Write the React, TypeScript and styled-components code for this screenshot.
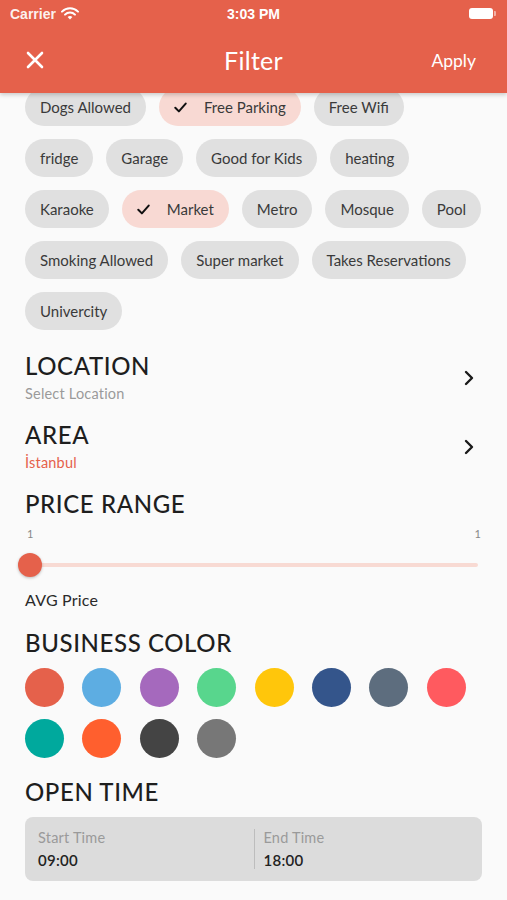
import React from "react";
import styled, { createGlobalStyle } from "styled-components";

const ACCENT = "#E5614B";
const FONT = `"Lato", "Noto Sans", sans-serif`;

const Global = createGlobalStyle`
  html, body { margin: 0; padding: 0; background: #FAFAFA; }
  body { font-family: ${FONT}; -webkit-font-smoothing: antialiased; }
  * { box-sizing: border-box; }
`;

const Page = styled.div`
  width: 507px;
  height: 900px;
  overflow: hidden;
  position: relative;
  background: #FAFAFA;
`;

const Header = styled.header`
  position: absolute;
  top: 0;
  left: 0;
  right: 0;
  height: 93px;
  background: ${ACCENT};
  color: #fff;
  z-index: 2;
  box-shadow: 0 2px 4px rgba(0, 0, 0, 0.18);
  display: flex;
  flex-direction: column;
`;

const StatusBar = styled.div`
  height: 27px;
  display: grid;
  grid-template-columns: 1fr auto 1fr;
  align-items: center;
  padding: 0 10px;
  font-family: "Liberation Sans", sans-serif;
  font-size: 14px;
  font-weight: 600;
`;

const StatusLeft = styled.div`
  display: flex;
  align-items: center;
  gap: 5px;
  color: rgba(255, 255, 255, 0.92);
`;

const StatusRight = styled.div`
  display: flex;
  justify-content: flex-end;
  align-items: center;
`;

const Battery = styled.div`
  width: 24px;
  height: 11px;
  border-radius: 3px;
  background: #fff;
  position: relative;
  margin-right: 4px;
  &::after {
    content: "";
    position: absolute;
    right: -3px;
    top: 3px;
    width: 2px;
    height: 5px;
    border-radius: 0 1px 1px 0;
    background: rgba(255, 255, 255, 0.5);
  }
`;

const NavBar = styled.div`
  flex: 1;
  display: grid;
  grid-template-columns: 1fr auto 1fr;
  align-items: center;
  padding: 0 31px;
`;

const CloseBtn = styled.div`
  display: flex;
  align-items: center;
  margin-left: -6px;
`;

const Title = styled.div`
  font-size: 25px;
  font-weight: 400;
  letter-spacing: 0.3px;
`;

const Apply = styled.div`
  justify-self: end;
  font-size: 17.5px;
`;

const Content = styled.main`
  padding: 88px 25px 20px 25px;
  display: flex;
  flex-direction: column;
`;

const Chips = styled.div`
  display: flex;
  flex-wrap: wrap;
  gap: 13px 13px;
`;

const Chip = styled.div<{ $selected?: boolean }>`
  height: 38px;
  border-radius: 19px;
  padding: 0 15px;
  display: flex;
  align-items: center;
  gap: 17px;
  font-size: 15px;
  letter-spacing: 0;
  color: #3A3A3A;
  background: ${(p) => (p.$selected ? "#F8D9D3" : "#E0E0E0")};
`;

const SectionRow = styled.div<{ $mt: number }>`
  margin-top: ${(p) => p.$mt}px;
  display: flex;
  align-items: center;
  justify-content: space-between;
  padding-right: 8px;
`;

const SectionTitle = styled.h2<{ $mt?: number }>`
  margin: ${(p) => p.$mt ?? 0}px 0 0 0;
  font-size: 24px;
  font-weight: 500;
  color: #1E1E1E;
  letter-spacing: 0.6px;
  line-height: 28px;
`;

const SubText = styled.div<{ $accent?: boolean }>`
  font-size: 14.5px;
  letter-spacing: 0.2px;
  color: ${(p) => (p.$accent ? ACCENT : "#9A9A9A")};
  line-height: 18px;
  margin-top: 5px;
`;

const RangeLabels = styled.div`
  display: flex;
  justify-content: space-between;
  font-size: 11px;
  color: #888;
  margin-top: 9px;
  padding: 0 1px 0 2px;
`;

const SliderTrack = styled.div`
  margin-top: 23px;
  height: 4px;
  border-radius: 2px;
  background: #F8DAD3;
  position: relative;
  margin-left: 5px;
  margin-right: 4px;
`;

const Thumb = styled.div`
  position: absolute;
  left: -12px;
  top: -10px;
  width: 24px;
  height: 24px;
  border-radius: 50%;
  background: ${ACCENT};
  box-shadow: 0 1px 3px rgba(0, 0, 0, 0.25);
`;

const AvgLabel = styled.div`
  margin-top: 23px;
  font-size: 16px;
  letter-spacing: 0.2px;
  color: #2A2A2A;
`;

const ColorGrid = styled.div`
  margin-top: 11px;
  display: grid;
  grid-template-columns: repeat(8, 39px);
  column-gap: 18.4px;
  row-gap: 12px;
`;

const Swatch = styled.div<{ $c: string }>`
  width: 39px;
  height: 39px;
  border-radius: 50%;
  background: ${(p) => p.$c};
`;

const TimeBox = styled.div`
  margin-top: 11px;
  width: 457px;
  height: 64px;
  border-radius: 8px;
  background: #DCDCDC;
  display: grid;
  grid-template-columns: 1fr 1fr;
  align-items: center;
`;

const TimeCell = styled.div<{ $divider?: boolean }>`
  padding-left: ${(p) => (p.$divider ? 9 : 13)}px;
  border-left: ${(p) => (p.$divider ? "1px solid #BDBDBD" : "none")};
  display: flex;
  flex-direction: column;
  gap: 5px;
`;

const TimeLabel = styled.div`
  font-size: 14.5px;
  letter-spacing: 0.2px;
  color: #9A9A9A;
`;

const TimeValue = styled.div`
  font-size: 15px;
  font-weight: 600;
  letter-spacing: 0.3px;
  color: #222;
`;

const Check = () => (
  <svg width="13" height="11" viewBox="0 0 13 11">
    <path d="M1.3 5.8 L4.9 9.4 L11.7 1.6" fill="none" stroke="#111" strokeWidth="2" strokeLinecap="round" strokeLinejoin="round" />
  </svg>
);

const Chevron = () => (
  <svg width="10" height="16" viewBox="0 0 10 16">
    <path d="M2 2 L8 8 L2 14" fill="none" stroke="#1a1a1a" strokeWidth="2.4" strokeLinecap="round" strokeLinejoin="round" />
  </svg>
);

const Wifi = () => (
  <svg width="18" height="13" viewBox="0 0 18 13">
    <path d="M1 4.6 A11.5 11.5 0 0 1 17 4.6" fill="none" stroke="#fff" strokeWidth="2" strokeLinecap="round" />
    <path d="M4 7.6 A7 7 0 0 1 14 7.6" fill="none" stroke="#fff" strokeWidth="2" strokeLinecap="round" />
    <path d="M9 12.5 L6.6 10.1 A3.4 3.4 0 0 1 11.4 10.1 Z" fill="#fff" />
  </svg>
);

const CloseIcon = () => (
  <svg width="20" height="20" viewBox="0 0 20 20">
    <path d="M3 3 L17 17 M17 3 L3 17" stroke="#fff" strokeWidth="2.6" strokeLinecap="round" />
  </svg>
);

const chips: { label: string; selected?: boolean }[] = [
  { label: "Dogs Allowed" },
  { label: "Free Parking", selected: true },
  { label: "Free Wifi" },
  { label: "fridge" },
  { label: "Garage" },
  { label: "Good for Kids" },
  { label: "heating" },
  { label: "Karaoke" },
  { label: "Market", selected: true },
  { label: "Metro" },
  { label: "Mosque" },
  { label: "Pool" },
  { label: "Smoking Allowed" },
  { label: "Super market" },
  { label: "Takes Reservations" },
  { label: "Univercity" },
];

const colors = [
  "#E5614B", "#5DADE2", "#A569BD", "#58D68D", "#FFC60B", "#34558B", "#5D6D7E", "#FF5A5F",
  "#00A99D", "#FF5F2E", "#444444", "#777777",
];

export default function App() {
  return (
    <Page>
      <Global />
      <Header>
        <StatusBar>
          <StatusLeft>
            Carrier <Wifi />
          </StatusLeft>
          <div>3:03 PM</div>
          <StatusRight>
            <Battery />
          </StatusRight>
        </StatusBar>
        <NavBar>
          <CloseBtn>
            <CloseIcon />
          </CloseBtn>
          <Title>Filter</Title>
          <Apply>Apply</Apply>
        </NavBar>
      </Header>
      <Content>
        <Chips>
          {chips.map((c) => (
            <Chip key={c.label} $selected={c.selected}>
              {c.selected && <Check />}
              {c.label}
            </Chip>
          ))}
        </Chips>

        <SectionRow $mt={22}>
          <div>
            <SectionTitle>LOCATION</SectionTitle>
            <SubText>Select Location</SubText>
          </div>
          <Chevron />
        </SectionRow>

        <SectionRow $mt={18}>
          <div>
            <SectionTitle>AREA</SectionTitle>
            <SubText $accent>İstanbul</SubText>
          </div>
          <Chevron />
        </SectionRow>

        <SectionTitle $mt={18}>PRICE RANGE</SectionTitle>
        <RangeLabels>
          <span>1</span>
          <span>1</span>
        </RangeLabels>
        <SliderTrack>
          <Thumb />
        </SliderTrack>
        <AvgLabel>AVG Price</AvgLabel>

        <SectionTitle $mt={20}>BUSINESS COLOR</SectionTitle>
        <ColorGrid>
          {colors.map((c) => (
            <Swatch key={c} $c={c} />
          ))}
        </ColorGrid>

        <SectionTitle $mt={20}>OPEN TIME</SectionTitle>
        <TimeBox>
          <TimeCell>
            <TimeLabel>Start Time</TimeLabel>
            <TimeValue>09:00</TimeValue>
          </TimeCell>
          <TimeCell $divider>
            <TimeLabel>End Time</TimeLabel>
            <TimeValue>18:00</TimeValue>
          </TimeCell>
        </TimeBox>
      </Content>
    </Page>
  );
}
